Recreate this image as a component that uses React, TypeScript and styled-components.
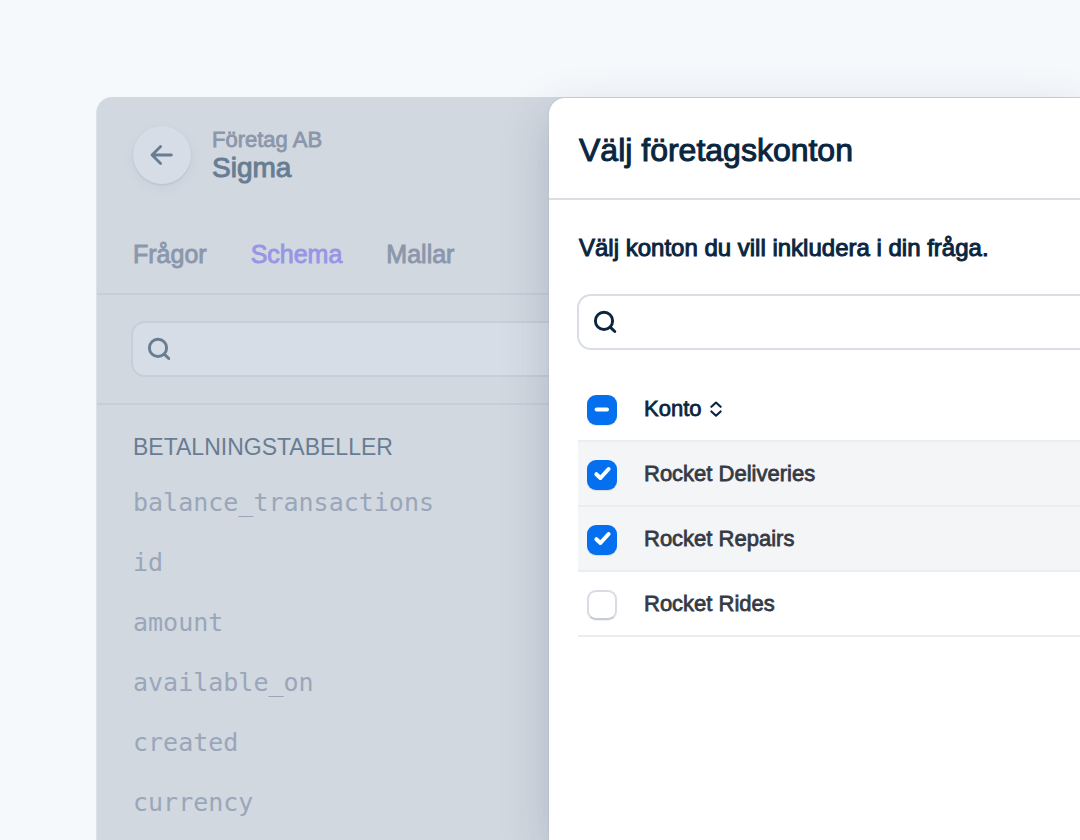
import React from "react";
import styled, { createGlobalStyle, css } from "styled-components";

const GlobalStyle = createGlobalStyle`
  *, *::before, *::after { box-sizing: border-box; }
  body {
    margin: 0;
    background: #f5f9fc;
    color: #0a2540;
    font-family: "Liberation Sans", Arial, sans-serif;
    overflow: hidden;
  }
  button, input { font: inherit; color: inherit; }
`;

const medium = css`
  -webkit-text-stroke: 0.035em currentColor;
`;

const Page = styled.div`
  display: flex;
  min-height: 100vh;
  padding: 97px 0 0 96px;
`;

const Shell = styled.div`
  position: relative;
  flex: 1;
  min-width: 0;
  background: #d1d8e0;
  border-left: 1px solid #dbe2e9;
  border-top-left-radius: 16px;
`;

const SigmaHeader = styled.header`
  padding: 29px 36px 0;
`;

const TitleRow = styled.div`
  display: flex;
  align-items: center;
  gap: 21px;
`;

const BackButton = styled.button`
  display: grid;
  place-items: center;
  width: 58px;
  height: 58px;
  padding: 0;
  border: 0;
  border-radius: 50%;
  background: #d6dde6;
  color: #687d93;
  box-shadow: 0 1px 2px rgba(100, 116, 145, 0.2), 0 4px 12px rgba(100, 116, 165, 0.07);
`;

const Company = styled.p`
  ${medium}
  margin: 0;
  font-size: 22px;
  line-height: 26px;
  color: #8b97ac;
`;

const AppName = styled.h1`
  ${medium}
  margin: 0;
  font-size: 28px;
  font-weight: 400;
  line-height: 30px;
  color: #687d93;
`;

const Tabs = styled.nav`
  display: flex;
  gap: 44px;
  padding: 54px 0 23px;
`;

const Tab = styled.a<{ $active?: boolean }>`
  ${medium}
  font-size: 25px;
  line-height: 32px;
  text-decoration: none;
  color: ${(p) => (p.$active ? "#9796e6" : "#8b97ac")};
`;

const FilterBar = styled.div`
  padding: 26px 36px 26px 34px;
  border: solid #c5cedb;
  border-width: 2px 0;
`;

const SearchField = styled.label<{ $muted?: boolean }>`
  display: flex;
  align-items: center;
  height: 56px;
  padding-left: 14px;
  gap: 12px;
  border: 2px solid ${(p) => (p.$muted ? "#c5cedb" : "#d8dee4")};
  border-radius: 14px;
  background: ${(p) => (p.$muted ? "#d6dde6" : "#ffffff")};
  color: ${(p) => (p.$muted ? "#687d93" : "#0a2540")};
`;

const SearchInput = styled.input`
  flex: 1;
  min-width: 0;
  height: 100%;
  padding: 0;
  border: 0;
  outline: 0;
  background: transparent;
  font-size: 22px;
`;

const Schema = styled.section`
  padding: 27px 36px 0;
`;

const SchemaHeading = styled.h2`
  margin: 0 0 11px;
  font-size: 23px;
  font-weight: 400;
  line-height: 30px;
  color: #687d93;
`;

const FieldList = styled.ul`
  margin: 0;
  padding: 0;
  list-style: none;
`;

const Field = styled.li`
  font-family: "DejaVu Sans Mono", monospace;
  font-size: 25px;
  line-height: 60px;
  color: #9aa6ba;
`;

const Drawer = styled.aside`
  position: absolute;
  top: 1px;
  right: 0;
  bottom: 0;
  left: 452px;
  background: #ffffff;
  border-top-left-radius: 16px;
  box-shadow: 0 0 2px rgba(60, 66, 87, 0.14), 0 16px 48px rgba(60, 66, 87, 0.22);
`;

const DrawerHeader = styled.header`
  padding: 32px 30px 28px;
  border-bottom: 2px solid #d8dee4;
`;

const DrawerTitle = styled.h2`
  margin: 0;
  font-size: 32px;
  font-weight: 400;
  line-height: 40px;
  -webkit-text-stroke: 1px currentColor;
`;

const DrawerBody = styled.div`
  padding: 32px 0 0 28px;
`;

const Lead = styled.p`
  margin: 0 0 30px 2px;
  font-size: 24px;
  line-height: 32px;
  -webkit-text-stroke: 1px currentColor;
`;

const SearchBleed = styled.div`
  margin-right: -16px;
`;

const DrawerClip = styled.div`
  overflow: hidden;
`;

const AccountTable = styled.table`
  width: 100%;
  margin: 27px 0 0 1px;
  border-collapse: separate;
  border-spacing: 0;
  table-layout: fixed;
`;

const CheckCell = styled.td`
  width: 66px;
  height: 65px;
  padding: 2px 0 0 9px;
  border-bottom: 2px solid #ebeef1;
`;

const NameCell = styled.th`
  height: 65px;
  padding: 0;
  border-bottom: 2px solid #ebeef1;
  font-weight: 400;
  text-align: left;
`;

const Row = styled.tr<{ $selected?: boolean }>`
  background: ${(p) => (p.$selected ? "#f4f5f7" : "transparent")};
`;

const RowLabel = styled.label`
  ${medium}
  font-size: 22px;
  line-height: 28px;
  color: #353a44;
`;

const SortButton = styled.button`
  ${medium}
  display: flex;
  align-items: center;
  gap: 8px;
  padding: 0;
  border: 0;
  background: none;
  font-size: 22px;
  line-height: 28px;
`;

const CheckWrap = styled.span`
  display: grid;
  width: 30px;
  height: 30px;
  > * { grid-area: 1 / 1; }
  > svg { pointer-events: none; }
`;

const CheckInput = styled.input<{ $on: boolean }>`
  appearance: none;
  width: 30px;
  height: 30px;
  margin: 0;
  border-radius: 9px;
  ${(p) =>
    p.$on
      ? css`
          background: #0570ef;
          box-shadow: 0 1px 1px rgba(0, 0, 0, 0.1);
        `
      : css`
          background: #ffffff;
          border: 2px solid #d8dde4;
          border-bottom-color: #c6ccd3;
          box-shadow: 0 1px 1px rgba(0, 0, 0, 0.06);
        `}
`;

const Glyph = styled.svg`
  display: block;
  fill: none;
  stroke: currentColor;
  stroke-linecap: round;
  stroke-linejoin: round;
`;

const SearchIcon = () => (
  <Glyph width="24" height="24" viewBox="0 0 24 24" strokeWidth="2.9" aria-hidden="true">
    <circle cx="11" cy="10.9" r="8.6" />
    <path d="M17.2 17.1 21.8 21.5" />
  </Glyph>
);

const ArrowIcon = () => (
  <Glyph width="24" height="24" viewBox="0 0 24 24" strokeWidth="2.8" aria-hidden="true">
    <path d="M10.6 3.4 2 12l8.6 8.6M2 12h19.4" />
  </Glyph>
);

const SortIcon = () => (
  <Glyph width="12" height="16" viewBox="0 0 12 16" strokeWidth="2.1" aria-hidden="true">
    <path d="M1.4 5.8 6 1.5l4.6 4.3M1.4 10.4 6 14.7l4.6-4.3" />
  </Glyph>
);

type CheckState = "on" | "off" | "mixed";

function Checkbox({ state, id, label }: { state: CheckState; id: string; label?: string }) {
  return (
    <CheckWrap>
      <CheckInput
        type="checkbox"
        id={id}
        aria-label={label}
        $on={state !== "off"}
        defaultChecked={state === "on"}
        ref={(el: HTMLInputElement | null) => {
          if (el) el.indeterminate = state === "mixed";
        }}
      />
      {state !== "off" && (
        <Glyph width="30" height="30" viewBox="0 0 30 30" color="#ffffff" strokeWidth="4" aria-hidden="true">
          <path d={state === "mixed" ? "M9.6 14.6h10.4" : "M9.4 14.2 13.4 18 21.6 9"} />
        </Glyph>
      )}
    </CheckWrap>
  );
}

const fields = ["balance_transactions", "id", "amount", "available_on", "created", "currency"];

const accounts = [
  { id: "deliveries", name: "Rocket Deliveries", selected: true },
  { id: "repairs", name: "Rocket Repairs", selected: true },
  { id: "rides", name: "Rocket Rides", selected: false },
];

export default function App() {
  return (
    <>
      <GlobalStyle />
      <Page>
        <Shell>
          <SigmaHeader>
            <TitleRow>
              <BackButton type="button" aria-label="Tillbaka">
                <ArrowIcon />
              </BackButton>
              <div>
                <Company>Företag AB</Company>
                <AppName>Sigma</AppName>
              </div>
            </TitleRow>
            <Tabs>
              <Tab href="#fragor">Frågor</Tab>
              <Tab href="#schema" $active aria-current="page">Schema</Tab>
              <Tab href="#mallar">Mallar</Tab>
            </Tabs>
          </SigmaHeader>
          <FilterBar>
            <SearchField $muted>
              <SearchIcon />
              <SearchInput type="text" aria-label="Sök i schema" />
            </SearchField>
          </FilterBar>
          <Schema>
            <SchemaHeading>BETALNINGSTABELLER</SchemaHeading>
            <FieldList>
              {fields.map((name) => (
                <Field key={name}>{name}</Field>
              ))}
            </FieldList>
          </Schema>

          <Drawer>
            <DrawerHeader>
              <DrawerTitle>Välj företagskonton</DrawerTitle>
            </DrawerHeader>
            <DrawerClip>
              <DrawerBody>
                <Lead>Välj konton du vill inkludera i din fråga.</Lead>
                <SearchBleed>
                  <SearchField>
                    <SearchIcon />
                    <SearchInput type="text" aria-label="Sök konton" />
                  </SearchField>
                </SearchBleed>
                <AccountTable>
                  <thead>
                    <Row>
                      <CheckCell>
                        <Checkbox state="mixed" id="all" label="Markera alla" />
                      </CheckCell>
                      <NameCell scope="col">
                        <SortButton type="button">
                          Konto
                          <SortIcon />
                        </SortButton>
                      </NameCell>
                    </Row>
                  </thead>
                  <tbody>
                    {accounts.map((a) => (
                      <Row key={a.id} $selected={a.selected}>
                        <CheckCell>
                          <Checkbox state={a.selected ? "on" : "off"} id={a.id} />
                        </CheckCell>
                        <NameCell scope="row">
                          <RowLabel htmlFor={a.id}>{a.name}</RowLabel>
                        </NameCell>
                      </Row>
                    ))}
                  </tbody>
                </AccountTable>
              </DrawerBody>
            </DrawerClip>
          </Drawer>
        </Shell>
      </Page>
    </>
  );
}
